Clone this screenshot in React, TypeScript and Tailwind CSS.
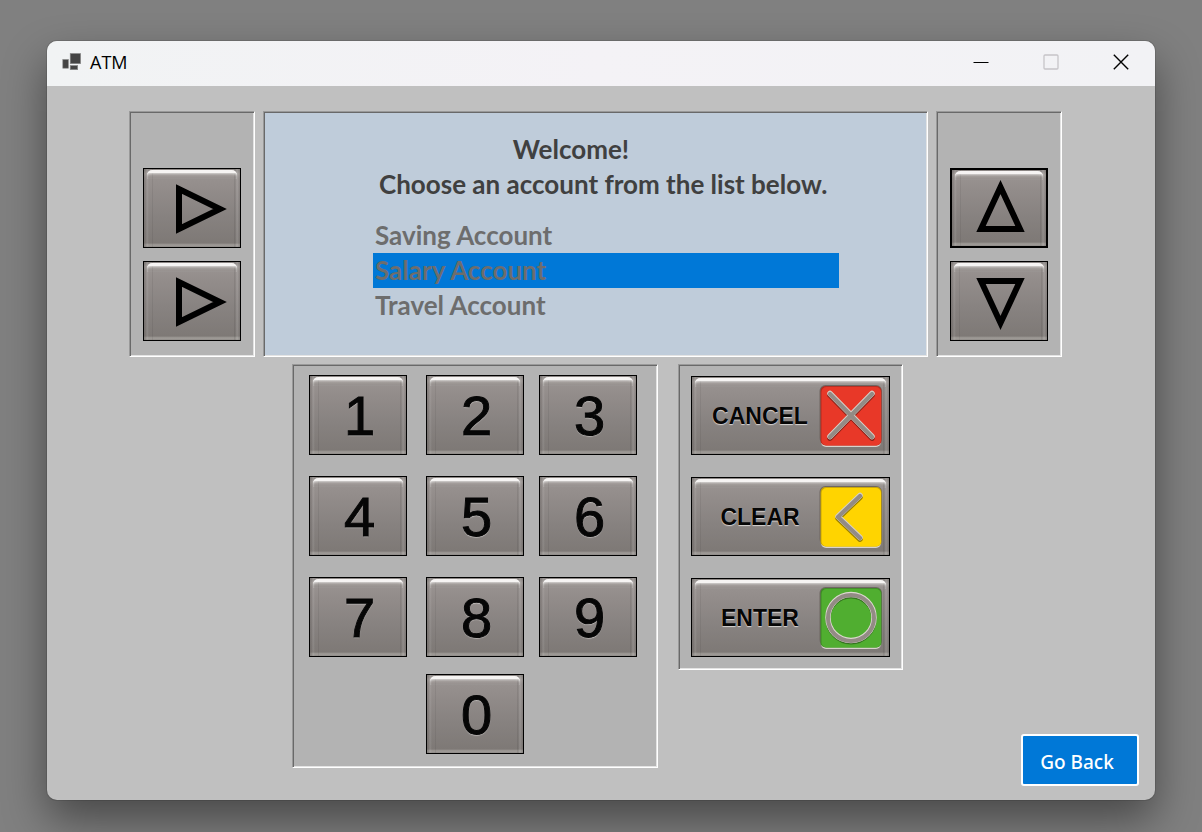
import { useState, type ReactNode } from "react";

const accounts = ["Saving Account", "Salary Account", "Travel Account"];

const metal =
  "relative border-black bg-[linear-gradient(90deg,#5f5a5855_0px,#6f6a6833_2px,#ffffff1c_3px,#00000000_5px,#00000000_8px,#00000010_8px,#00000010_9px,#00000000_9px,#00000000_calc(100%-6px),#00000014_calc(100%-6px),#00000014_calc(100%-5px),#ffffff22_calc(100%-3px),#5f5a5844_100%),linear-gradient(180deg,#8a8583_0px,#a5a09d_5px,#97918f_9px,#928c8a_20px,#878280_60%,#7e7976_calc(100%-4px),#a19d99_calc(100%-2px),#8e8a87_100%)] before:absolute before:inset-x-[3px] before:top-px before:h-[9px] before:rounded-t-[5px] before:border-t-[3px] before:border-[#f6f4f3] before:shadow-[inset_0_1px_2px_#ffffff88] before:content-['']";

const sunken =
  "border border-t-[#999] border-l-[#999] border-r-white border-b-white shadow-[inset_1px_1px_0_#696969,inset_-1px_-1px_0_#e3e3e3]";

function ArrowKey({
  label,
  points,
  focused = false,
  onClick,
}: {
  label: string;
  points: string;
  focused?: boolean;
  onClick?: () => void;
}) {
  return (
    <button
      type="button"
      aria-label={label}
      onClick={onClick}
      className={`${metal} flex h-20 w-[98px] items-center justify-center ${focused ? "border-2" : "border"}`}
    >
      <svg width="94" height="76" viewBox="0 0 94 76" aria-hidden="true" className="shrink-0">
        <polygon points={points} fill="none" stroke="#000" strokeWidth="6" strokeMiterlimit="10" />
      </svg>
    </button>
  );
}

function DigitKey({ digit, className = "" }: { digit: string; className?: string }) {
  return (
    <button
      type="button"
      className={`${metal} flex h-20 w-[98px] items-center justify-center border pt-0.5 pl-1 font-['Liberation_Sans',Arial,sans-serif] text-[56px] leading-[64px] text-[#060606] [text-shadow:0_1px_1px_#d8d5d3] [-webkit-text-stroke:1px_#060606] ${className}`}
    >
      {digit}
    </button>
  );
}

function ActionKey({ label, children }: { label: string; children: ReactNode }) {
  return (
    <button
      type="button"
      className={`${metal} flex h-[79px] w-[199px] items-center border pr-1.5 pl-2.5 font-['Liberation_Sans',Arial,sans-serif] text-[23px] leading-7 font-bold text-[#060606] [text-shadow:0_1px_1px_#d8d5d3]`}
    >
      <span className="flex-1 text-center">{label}</span>
      <svg width="64" height="64" viewBox="0 0 64 64" aria-hidden="true" className="shrink-0">
        {children}
      </svg>
    </button>
  );
}

function Plate({ fill, edge }: { fill: string; edge: string }) {
  return (
    <>
      <rect x="2" y="4" width="60" height="59" rx="5" fill="#d8d2cc" />
      <rect x="0.5" y="1" width="62.5" height="59" rx="6" fill="#6f6763" />
      <rect x="1.5" y="2" width="61" height="59.5" rx="5" fill={edge} />
      <rect x="2.5" y="3" width="59.5" height="58.5" rx="5" fill={fill} />
    </>
  );
}

function Groove({ d }: { d: string }) {
  return (
    <g fill="none" strokeLinecap="round" strokeLinejoin="round">
      <path d={d} stroke="#00000066" strokeWidth="5.5" transform="translate(0 1.2)" />
      <path d={d} stroke="#d6d0c8" strokeWidth="5.5" transform="translate(0 -0.5)" />
      <path d={d} stroke="#938b85" strokeWidth="4.2" />
    </g>
  );
}

export default function App() {
  const [selected, setSelected] = useState(1);

  return (
    <div className="flex min-h-screen flex-col overflow-hidden bg-[#808080] px-[47px] pt-[41px] pb-8">
      <main className="flex flex-1 flex-col overflow-hidden rounded-[10px] bg-[#c0c0c0] shadow-[0_0_0_1px_#0000001a,0_20px_44px_#00000070]">
        <header className="flex h-[45px] items-center bg-linear-to-r from-[#f1f3f4] via-[#f4f2f6] to-[#f2f2f5] pr-[18px] pb-[3px] pl-[15px]">
          <svg width="19" height="18" viewBox="0 0 19 18" aria-hidden="true">
            <g fill="#444" stroke="#8a8a8a" strokeWidth="0.6">
              <rect x="0.8" y="6.5" width="5.6" height="8.7" />
              <rect x="8.2" y="0.5" width="10.4" height="10.2" />
              <rect x="8.2" y="12.5" width="7.5" height="4.2" />
            </g>
          </svg>
          <h1 className="ml-[9px] flex-1 font-['Open_Sans',sans-serif] text-lg leading-6 text-black">ATM</h1>
          <div className="flex items-center gap-[38px]">
            <button type="button" aria-label="Minimize" className="flex h-8 w-8 items-center justify-center">
              <svg width="16" height="16" viewBox="0 0 16 16" aria-hidden="true">
                <path d="M0.5 8.5H15.5" stroke="#000" />
              </svg>
            </button>
            <button type="button" aria-label="Maximize" disabled className="flex h-8 w-8 items-center justify-center">
              <svg width="16" height="16" viewBox="0 0 16 16" aria-hidden="true">
                <rect x="1" y="1" width="14" height="14" rx="1" fill="none" stroke="#c6c4c8" strokeWidth="1.3" />
              </svg>
            </button>
            <button type="button" aria-label="Close" className="flex h-8 w-8 items-center justify-center">
              <svg width="16" height="16" viewBox="0 0 16 16" aria-hidden="true">
                <path d="M0.8 0.8L15.2 15.2M15.2 0.8L0.8 15.2" stroke="#000" strokeWidth="1.4" />
              </svg>
            </button>
          </div>
        </header>

        <div className="flex flex-1 flex-col gap-[7px] pt-[25px]">
          <div className="flex h-[246px] gap-2 pr-[93px] pl-[82px]">
            <div className={`${sunken} flex w-[126px] flex-col items-center gap-[13px] bg-[#b3b3b3] pt-14`}>
              <ArrowKey label="Select first option" points="34,19 34,59 75,39" />
              <ArrowKey label="Select second option" points="34,19 34,59 75,39" />
            </div>

            <section
              className={`${sunken} flex-1 bg-[#bfccda] pt-5 pr-[88px] pl-[109px] font-[Lato,Calibri,sans-serif] text-[26px] leading-[35px] font-bold`}
            >
              <div className="pl-1.5 text-[#404040]">
                <p className="pr-[76px] text-center">Welcome!</p>
                <p className="whitespace-nowrap">Choose an account from the list below.</p>
              </div>
              <ul role="listbox" aria-label="Accounts" className="mt-4 text-[#6d6d6d]">
                {accounts.map((name, i) => (
                  <li
                    key={name}
                    role="option"
                    aria-selected={i === selected}
                    onClick={() => setSelected(i)}
                    className={i === selected ? "bg-[#0078d7] pl-0.5" : "pl-0.5"}
                  >
                    {name}
                  </li>
                ))}
              </ul>
            </section>

            <div className={`${sunken} flex w-[126px] flex-col items-center gap-[13px] bg-[#b3b3b3] pt-14`}>
              <ArrowKey
                label="Move up"
                focused
                points="29,59 68,59 48.5,17"
                onClick={() => setSelected(Math.max(0, selected - 1))}
              />
              <ArrowKey
                label="Move down"
                points="29,18 68,18 48.5,60"
                onClick={() => setSelected(Math.min(accounts.length - 1, selected + 1))}
              />
            </div>
          </div>

          <div className="grid flex-1 grid-cols-[1fr_auto_1fr] pr-4 pb-3.5 pl-2">
            <div className="col-start-2 flex items-start gap-5">
              <div
                className={`${sunken} grid grid-cols-[117px_113px_98px] grid-rows-[101px_101px_97px_80px] bg-[#b3b3b3] pt-2.5 pr-5 pb-[13px] pl-4`}
              >
                {["1", "2", "3", "4", "5", "6", "7", "8", "9"].map((digit) => (
                  <DigitKey key={digit} digit={digit} />
                ))}
                <DigitKey digit="0" className="col-start-2" />
              </div>

              <div className={`${sunken} flex flex-col gap-[22px] bg-[#b3b3b3] px-3 pt-[11px] pb-3`}>
                <ActionKey label="CANCEL">
                  <Plate fill="#e83828" edge="#b32a1e" />
                  <Groove d="M11 10L53 53M53 10L11 53" />
                </ActionKey>
                <ActionKey label="CLEAR">
                  <Plate fill="#ffd400" edge="#c9a500" />
                  <Groove d="M41 11L19 32L41 53" />
                </ActionKey>
                <ActionKey label="ENTER">
                  <Plate fill="#50ae30" edge="#3d8a24" />
                  <g fill="none">
                    <circle cx="32" cy="33" r="23" stroke="#00000055" strokeWidth="5" />
                    <circle cx="32" cy="31.5" r="23" stroke="#ddd8d0" strokeWidth="5.5" />
                    <circle cx="32" cy="32" r="23" stroke="#938b85" strokeWidth="4" />
                  </g>
                </ActionKey>
              </div>
            </div>

            <button
              type="button"
              className="h-[52px] w-[118px] self-end justify-self-end rounded-[3px] border-2 border-white bg-[#0078d7] pt-1 pr-1.5 font-['Noto_Sans',sans-serif] text-[19px] leading-6 font-medium text-white"
            >
              Go Back
            </button>
          </div>
        </div>
      </main>
    </div>
  );
}
